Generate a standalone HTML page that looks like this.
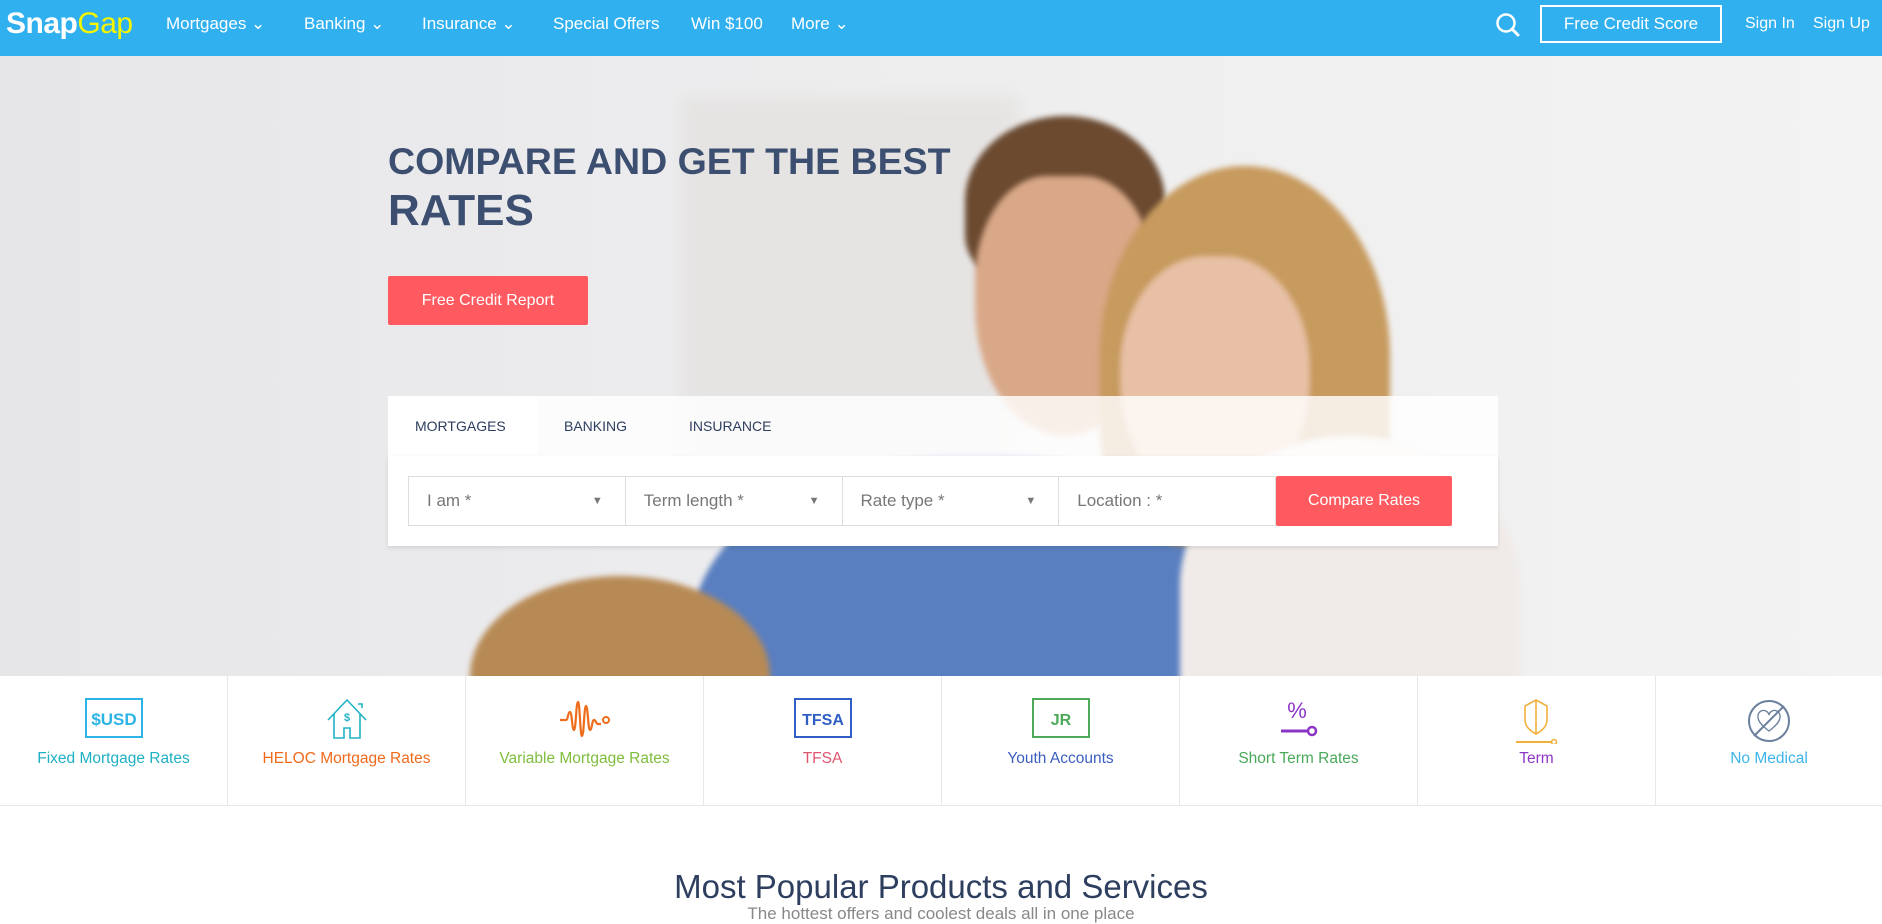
<!DOCTYPE html>
<html><head><meta charset="utf-8"><style>
*{margin:0;padding:0;box-sizing:border-box}
body{width:1882px;height:914px;overflow:hidden;background:#fff;font-family:"Liberation Sans",sans-serif;position:relative}
.nav{position:absolute;left:0;top:0;width:1882px;height:56px;background:#31b0f0;color:#fff}
.nav .t{position:absolute;top:14px;font-size:17px;white-space:nowrap}
.logo{position:absolute;left:6px;top:7px;font-size:30px;font-weight:bold;letter-spacing:-0.5px}
.hero{position:absolute;left:0;top:56px;width:1882px;height:620px;overflow:hidden;
background:linear-gradient(90deg,#e6e6e8 0%,#ececee 35%,#efefef 60%,#f3f3f3 100%)}
.blob{position:absolute;border-radius:50%;filter:blur(3px)}
.cats{position:absolute;left:0;top:676px;width:1882px;height:130px;border-bottom:1px solid #e8e8e8;background:#fff}
.cat{position:absolute;top:0;height:130px;border-right:1px solid #e8e8e8;text-align:center}
.cat .lb{position:absolute;left:0;right:0;top:74px;font-size:15.5px}
.cat svg{position:absolute;left:50%;top:22px;transform:translateX(-50%)}
</style></head><body>
<div class="nav">
<div class="logo">Snap<span style="color:#f5f500;font-weight:normal">Gap</span></div>
<div class="t" style="left:166px">Mortgages ⌄</div>
<div class="t" style="left:304px">Banking ⌄</div>
<div class="t" style="left:422px">Insurance ⌄</div>
<div class="t" style="left:553px">Special Offers</div>
<div class="t" style="left:691px">Win $100</div>
<div class="t" style="left:791px">More ⌄</div>
<svg style="position:absolute;left:1494px;top:11px" width="30" height="30" viewBox="0 0 30 30"><circle cx="12" cy="12" r="8.5" fill="none" stroke="#fff" stroke-width="2.5"/><path d="M18 18l6 6" stroke="#fff" stroke-width="3" stroke-linecap="round"/></svg>
<div style="position:absolute;left:1540px;top:5px;width:182px;height:38px;border:2px solid #fff;font-size:17px;text-align:center;line-height:34px">Free Credit Score</div>
<div class="t" style="left:1745px;font-size:16px;top:15px">Sign In</div>
<div class="t" style="left:1813px;font-size:16px;top:15px">Sign Up</div>
</div>
<div class="hero">
<div style="position:absolute;left:680px;top:40px;width:340px;height:380px;background:#e2dfdc;opacity:.6;filter:blur(8px)"></div>
<div class="blob" style="left:690px;top:400px;width:580px;height:400px;background:#5a7fc0;border-radius:45% 45% 0 0"></div>
<div class="blob" style="left:470px;top:520px;width:300px;height:200px;background:#b78a55;border-radius:60% 60% 0 0"></div>
<div class="blob" style="left:965px;top:60px;width:200px;height:170px;background:#6b4a30;border-radius:50% 50% 30% 30%"></div>
<div class="blob" style="left:975px;top:120px;width:180px;height:260px;background:#d9a888;border-radius:40% 40% 50% 50%"></div>
<div class="blob" style="left:1100px;top:110px;width:290px;height:380px;background:#c79a5e;border-radius:50% 50% 30% 30%"></div>
<div class="blob" style="left:1120px;top:200px;width:190px;height:250px;background:#e7c0a6;border-radius:45% 45% 50% 50%"></div>
<div class="blob" style="left:1180px;top:380px;width:340px;height:300px;background:#f0ebe8;border-radius:50% 50% 0 0"></div>
<div style="position:absolute;left:388px;top:84px;font-size:37.5px;color:#3d4f70;font-weight:600;white-space:nowrap">COMPARE AND GET THE BEST</div>
<div style="position:absolute;left:388px;top:130px;font-size:44px;color:#3d4f70;font-weight:bold">RATES</div>
<div style="position:absolute;left:388px;top:220px;width:200px;height:49px;background:#ff5a5f;border-radius:2px;color:#fff;font-size:16px;text-align:center;line-height:49px">Free Credit Report</div>
<div style="position:absolute;left:388px;top:340px;width:1110px;height:60px;background:rgba(255,255,255,.82)"></div>
<div style="position:absolute;left:388px;top:340px;width:149px;height:60px;background:#fff"></div>
<div style="position:absolute;left:415px;top:362px;font-size:14px;color:#2d3e5e">MORTGAGES</div>
<div style="position:absolute;left:564px;top:362px;font-size:14px;color:#2d3e5e">BANKING</div>
<div style="position:absolute;left:689px;top:362px;font-size:14px;color:#2d3e5e">INSURANCE</div>
<div style="position:absolute;left:388px;top:400px;width:1110px;height:90px;background:#fff;box-shadow:0 2px 4px rgba(0,0,0,.1)"></div>
<div style="position:absolute;left:408px;top:420px;width:868px;height:50px;border:1px solid #ddd;background:#fff;display:flex;font-size:17px;color:#777">
<div style="width:217px;border-right:1px solid #ddd;padding:14px 18px;position:relative">I am *<span style="position:absolute;right:22px;font-size:11px;top:18px">▼</span></div>
<div style="width:217px;border-right:1px solid #ddd;padding:14px 18px;position:relative">Term length *<span style="position:absolute;right:22px;font-size:11px;top:18px">▼</span></div>
<div style="width:217px;border-right:1px solid #ddd;padding:14px 18px;position:relative">Rate type *<span style="position:absolute;right:22px;font-size:11px;top:18px">▼</span></div>
<div style="width:216px;padding:14px 18px">Location : *</div>
</div>
<div style="position:absolute;left:1276px;top:420px;width:176px;height:50px;background:#ff5a5f;border-radius:2px;color:#fff;font-size:16px;text-align:center;line-height:50px">Compare Rates</div>
</div>
<div class="cats">
<div class="cat" style="left:0;width:228px"><svg width="58" height="40" viewBox="0 0 58 40"><rect x="1" y="1" width="56" height="38" fill="none" stroke="#2db4e6" stroke-width="2"/><text x="29" y="27" text-anchor="middle" font-family="Liberation Sans" font-weight="bold" font-size="17" fill="#2db4e6">$USD</text></svg><div class="lb" style="color:#1fb0c4">Fixed Mortgage Rates</div></div>
<div class="cat" style="left:228px;width:238px"><svg width="44" height="42" viewBox="0 0 44 42"><path d="M3 22L22 2L41 22M9 16V40H19V30H25V40H35V16M33 6h4v4" fill="none" stroke="#21b3c6" stroke-width="1.6"/><text x="22" y="23" text-anchor="middle" font-size="11" font-weight="bold" fill="#21b3c6" font-family="Liberation Sans">$</text></svg><div class="lb" style="color:#f06a1c">HELOC Mortgage Rates</div></div>
<div class="cat" style="left:466px;width:238px"><svg width="54" height="40" viewBox="0 0 54 40"><path d="M2 22h6c2 0 2-8 4-8s2 18 4 18 2-28 4-28 2 34 4 34 2-30 4-30 2 24 4 24 2-10 4-10 2 4 4 4h3" fill="none" stroke="#ef6c1a" stroke-width="2.2"/><circle cx="48" cy="22" r="3" fill="none" stroke="#ef6c1a" stroke-width="2"/></svg><div class="lb" style="color:#7fbd3c">Variable Mortgage Rates</div></div>
<div class="cat" style="left:704px;width:238px"><svg width="58" height="40" viewBox="0 0 58 40"><rect x="1" y="1" width="56" height="38" fill="none" stroke="#2f5fc4" stroke-width="2"/><text x="29" y="27" text-anchor="middle" font-family="Liberation Sans" font-weight="bold" font-size="16" fill="#2f5fc4">TFSA</text></svg><div class="lb" style="color:#e0566f">TFSA</div></div>
<div class="cat" style="left:942px;width:238px"><svg width="58" height="40" viewBox="0 0 58 40"><rect x="1" y="1" width="56" height="38" fill="none" stroke="#4caa58" stroke-width="2"/><text x="29" y="27" text-anchor="middle" font-family="Liberation Sans" font-weight="bold" font-size="16" fill="#4caa58">JR</text></svg><div class="lb" style="color:#3c5fc0">Youth Accounts</div></div>
<div class="cat" style="left:1180px;width:238px"><svg width="44" height="42" viewBox="0 0 44 42"><text x="20" y="20" text-anchor="middle" font-size="22" fill="#8b35c6" font-family="Liberation Sans">%</text><path d="M4 33h28" stroke="#8b35c6" stroke-width="3"/><circle cx="35" cy="33" r="4" fill="none" stroke="#8b35c6" stroke-width="2.5"/></svg><div class="lb" style="color:#4aa85a">Short Term Rates</div></div>
<div class="cat" style="left:1418px;width:238px"><svg width="46" height="46" viewBox="0 0 46 46"><path d="M22 2l11 6v14c0 6-5 11-11 14-6-3-11-8-11-14V8z M22 2v34" fill="none" stroke="#f0b03c" stroke-width="1.6"/><path d="M2 44h36" stroke="#f0b03c" stroke-width="2"/><circle cx="40" cy="44" r="2.5" fill="#fff" stroke="#f0b03c" stroke-width="1.6"/></svg><div class="lb" style="color:#8e35c6">Term</div></div>
<div class="cat" style="left:1656px;width:226px;border-right:none"><svg width="46" height="46" viewBox="0 0 46 46"><circle cx="23" cy="23" r="20" fill="none" stroke="#6a7f9c" stroke-width="2"/><path d="M8 38L38 8" stroke="#6a7f9c" stroke-width="2"/><path d="M23 33c-8-6-11-10-11-14a5 5 0 0 1 11-2 5 5 0 0 1 11 2c0 4-3 8-11 14z" fill="none" stroke="#6a7f9c" stroke-width="1.3"/></svg><div class="lb" style="color:#3cb5ea">No Medical</div></div>
</div>
<div style="position:absolute;left:0;width:1882px;top:868px;text-align:center;font-size:33px;color:#2d3e5e;font-weight:300">Most Popular Products and Services</div>
<div style="position:absolute;left:0;width:1882px;top:904px;text-align:center;font-size:17px;color:#888">The hottest offers and coolest deals all in one place</div>
</body></html>
